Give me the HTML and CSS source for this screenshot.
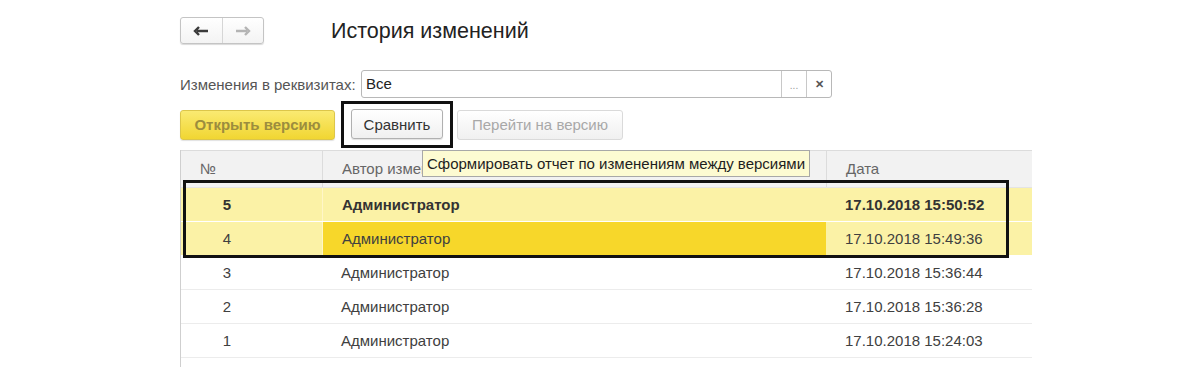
FILE: index.html
```html
<!DOCTYPE html>
<html lang="ru">
<head>
    <meta charset="UTF-8">
    <title>История изменений</title>
    <link rel="stylesheet" href="styles.css">
</head>
<body>
<div class="okno">
    <div class="shapka">
        <div class="navigacia">
            <span class="nav-knopka">
                <svg width="16" height="10" viewBox="0 0 16 10"><path d="M15 5H4M6 1L2 5l4 4" fill="none" stroke="#3a3a3a" stroke-width="2.4"/></svg>
            </span>
            <span class="nav-knopka">
                <svg width="16" height="10" viewBox="0 0 16 10"><path d="M1 5h11M10 1l4 4-4 4" fill="none" stroke="#b4b4b4" stroke-width="2.4"/></svg>
            </span>
        </div>
        <h1 class="zagolovok">История изменений</h1>
    </div>

    <div class="pole-stroka">
        <label class="pole-metka">Изменения в реквизитах:</label>
        <div class="pole">
            <span class="pole-znachenie">Все</span>
            <span class="pole-knopka tochki">...</span>
            <span class="pole-knopka krest">&#x2715;</span>
        </div>
    </div>

    <div class="knopki">
        <button class="knopka knopka-glavnaya">Открыть версию</button>
        <div class="vydelenie">
            <button class="knopka">Сравнить</button>
        </div>
        <button class="knopka knopka-neaktivna">Перейти на версию</button>
    </div>

    <div class="tablica">
        <div class="stroka shapka-tablicy">
            <div class="yacheika kol-nomer kol-levo">№</div>
            <div class="yacheika kol-avtor"><span class="obrezka">Автор изменения</span></div>
            <div class="yacheika kol-data">Дата</div>
        </div>
        <div class="stroka tekushaya zhirnaya">
            <div class="yacheika kol-nomer">5</div>
            <div class="yacheika kol-avtor">Администратор</div>
            <div class="yacheika kol-data">17.10.2018 15:50:52</div>
        </div>
        <div class="stroka tekushaya">
            <div class="yacheika kol-nomer">4</div>
            <div class="yacheika kol-avtor vybrana">Администратор</div>
            <div class="yacheika kol-data">17.10.2018 15:49:36</div>
        </div>
        <div class="stroka">
            <div class="yacheika kol-nomer">3</div>
            <div class="yacheika kol-avtor">Администратор</div>
            <div class="yacheika kol-data">17.10.2018 15:36:44</div>
        </div>
        <div class="stroka">
            <div class="yacheika kol-nomer">2</div>
            <div class="yacheika kol-avtor">Администратор</div>
            <div class="yacheika kol-data">17.10.2018 15:36:28</div>
        </div>
        <div class="stroka">
            <div class="yacheika kol-nomer">1</div>
            <div class="yacheika kol-avtor">Администратор</div>
            <div class="yacheika kol-data">17.10.2018 15:24:03</div>
        </div>

        <div class="podskazka">Сформировать отчет по изменениям между версиями</div>
        <div class="ramka-strok"></div>
    </div>
</div>
</body>
</html>
```

FILE: styles.css
```css
body {
  margin: 0;
  background: #fff;
  font-family: "Liberation Sans", Arial, sans-serif;
  color: #404040;
}

.okno {
  padding: 17px 0 0 180px;
}

.shapka {
  display: flex;
  align-items: center;
  height: 27px;
}

.navigacia {
  display: flex;
  width: 84px;
  height: 27px;
  box-sizing: border-box;
  border: 1px solid #c4c4c4;
  border-radius: 3px;
  box-shadow: 0 1px 1px rgba(0, 0, 0, 0.15);
  background: linear-gradient(#fff, #f3f3f3);
}

.nav-knopka {
  flex: 1;
  display: flex;
  align-items: center;
  justify-content: center;
}

.nav-knopka:first-child {
  border-right: 1px solid #d6d6d6;
}

.zagolovok {
  margin: 2px 0 0 67px;
  font-size: 21.5px;
  font-weight: normal;
  color: #222;
}

.pole-stroka {
  display: flex;
  align-items: center;
  margin-top: 26px;
  height: 28px;
}

.pole-metka {
  width: 181px;
  font-size: 15px;
  color: #555;
}

.pole {
  display: flex;
  width: 471px;
  height: 28px;
  box-sizing: border-box;
  border: 1px solid #b8b8b8;
  border-radius: 3px;
}

.pole-znachenie {
  flex: 1;
  padding-left: 4px;
  font-size: 15px;
  line-height: 26px;
  color: #222;
}

.pole-knopka {
  width: 24px;
  border-left: 1px solid #c8c8c8;
  text-align: center;
  line-height: 26px;
}

.tochki {
  font-size: 10px;
  color: #999;
  line-height: 30px;
}

.krest {
  font-size: 11px;
  font-weight: bold;
  color: #555;
}

.knopki {
  display: flex;
  align-items: center;
  margin-top: 3px;
  height: 47px;
}

.knopka {
  height: 30px;
  box-sizing: border-box;
  padding: 0 14px;
  border: 1px solid #b0b0b0;
  border-radius: 3px;
  background: linear-gradient(#fff, #f0f0f0);
  box-shadow: 0 1px 1px rgba(0, 0, 0, 0.12);
  font-family: inherit;
  font-size: 15px;
  color: #333;
}

.knopka-glavnaya {
  width: 155px;
  margin-right: 6px;
  padding: 0;
  border-color: #dcc64a;
  background: linear-gradient(#faea72, #f1d632);
  font-weight: bold;
  color: #9c8d3e;
}

.vydelenie {
  border: 3px solid #111;
  padding: 5px 7px 6px;
}

.vydelenie .knopka {
  width: 92px;
  padding: 0;
}

.knopka-neaktivna {
  width: 166px;
  margin-left: 4px;
  padding: 0;
  border-color: #dadada;
  color: #a8a8a8;
  box-shadow: none;
}

.tablica {
  position: relative;
  width: 852px;
  height: 217px;
  margin-top: 2px;
  box-sizing: border-box;
  border-left: 1px solid #cfcfcf;
}

.stroka {
  display: flex;
  height: 33px;
  border-bottom: 1px solid #ececec;
  font-size: 15px;
  line-height: 33px;
}

.shapka-tablicy {
  height: 36px;
  line-height: 36px;
  background: #f2f2f2;
  border-top: 1px solid #dcdcdc;
  border-bottom: 1px solid #e4e4e4;
  color: #666;
}

.yacheika {
  box-sizing: border-box;
  white-space: nowrap;
  overflow: hidden;
}

.obrezka {
  display: inline-block;
  width: 81px;
  overflow: hidden;
  vertical-align: top;
}

.kol-nomer {
  width: 141px;
  padding-right: 91px;
  text-align: right;
}

.kol-nomer.kol-levo {
  padding: 0 0 0 19px;
  text-align: left;
}

.kol-avtor {
  width: 504px;
  padding-left: 19px;
}

.kol-data {
  width: 206px;
  padding-left: 19px;
}

.shapka-tablicy .kol-avtor,
.shapka-tablicy .kol-data {
  border-left: 1px solid #dcdcdc;
}

.tekushaya {
  background: #fbf2a6;
  border-bottom-color: #fff;
}

.tekushaya .kol-avtor {
  border-left: 1px solid #fff6c8;
}

.vybrana {
  background: #f7d72a;
}

.zhirnaya {
  font-weight: bold;
  color: #333;
}

.podskazka {
  position: absolute;
  left: 241px;
  top: 0;
  height: 27px;
  box-sizing: border-box;
  padding: 0 4px;
  background: #fdfbd2;
  border: 1px solid #a8a8a8;
  font-size: 15px;
  line-height: 25px;
  color: #1e1e1e;
  white-space: nowrap;
}

.ramka-strok {
  position: absolute;
  left: 2px;
  top: 30px;
  width: 826px;
  height: 78px;
  box-sizing: border-box;
  border: 3px solid #111;
}
```
